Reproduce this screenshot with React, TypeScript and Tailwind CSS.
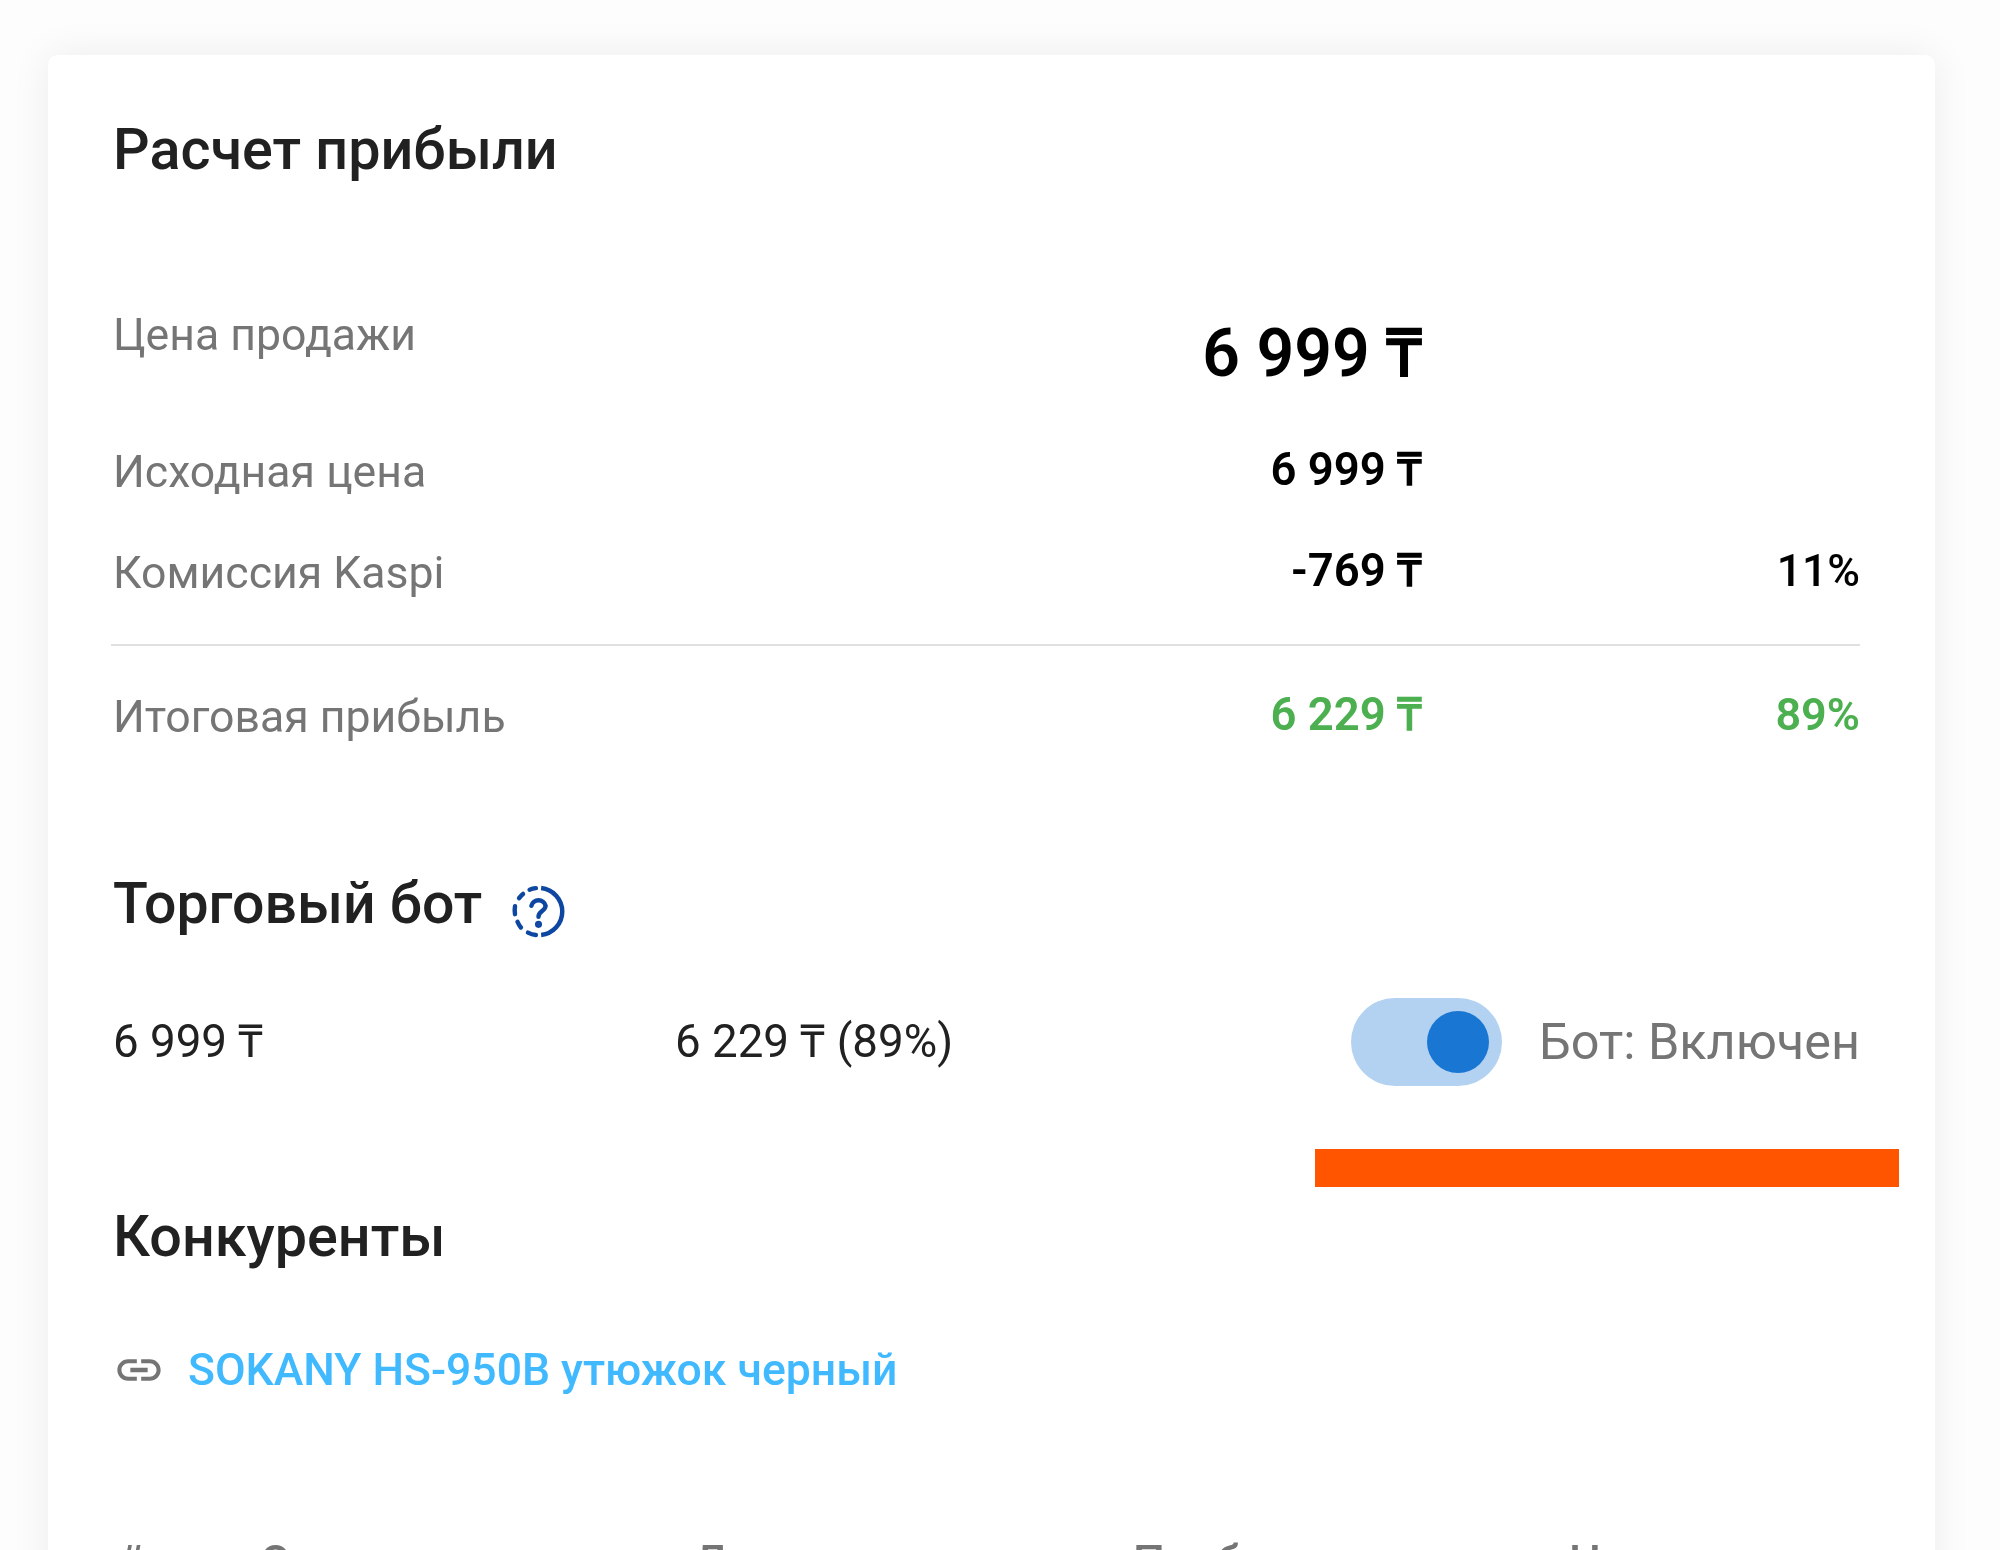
const FONT = 'font-["Roboto",sans-serif]'

const ROWS = [
  { label: 'Исходная цена', value: '6 999 ₸', pct: '' },
  { label: 'Комиссия Kaspi', value: '-769 ₸', pct: '11%' },
]

function HelpIcon() {
  return (
    <svg viewBox="0 0 24 24" className="mt-[14px] h-[63px] w-[63px]" fill="none" stroke="#0d47a1" strokeWidth="1.7">
      <path d="M13 3.05a9 9 0 0 1 0 17.9" />
      <path d="M8.6 3.7a9 9 0 0 1 2.4-.6" strokeLinecap="round" />
      <path d="M4.6 6.9a9 9 0 0 1 1.5-1.6" strokeLinecap="round" />
      <path d="M3.05 13a9 9 0 0 1 0-3" strokeLinecap="round" />
      <path d="M5.3 18.1a9 9 0 0 1-1.3-2.2" strokeLinecap="round" />
      <path d="M11 20.95a9 9 0 0 1-3-.9" strokeLinecap="round" />
      <path d="M9.3 9.8a2.8 2.8 0 0 1 5.4 0c0 2-2.7 2.1-2.7 4.2" strokeLinecap="round" />
      <circle cx="12" cy="16.9" r="0.5" fill="#0d47a1" />
    </svg>
  )
}

function LinkIcon() {
  return (
    <svg viewBox="0 0 24 24" className="h-[52px] w-[52px]" fill="#757575">
      <path d="M3.9 12c0-1.71 1.39-3.1 3.1-3.1h4V7H7c-2.76 0-5 2.24-5 5s2.24 5 5 5h4v-1.9H7c-1.71 0-3.1-1.39-3.1-3.1zM8 13h8v-2H8v2zm9-6h-4v1.9h4c1.71 0 3.1 1.39 3.1 3.1s-1.39 3.1-3.1 3.1h-4V17h4c2.76 0 5-2.24 5-5s-2.24-5-5-5z" />
    </svg>
  )
}

export default function App() {
  return (
    <div className={`h-[1550px] w-[2000px] overflow-hidden bg-[#fdfdfd] pl-[48px] pt-[55px] ${FONT}`}>
      <div className="h-[1600px] w-[1887px] rounded-[10px] bg-white pl-[65px] pr-[75px] pt-[54px] shadow-[0_0_40px_rgba(0,0,0,0.07)] blur-[0.7px]">
        {/* ── Расчет прибыли ─────────────────── */}
        <h2 className="flex h-[82px] items-center text-[57.5px] font-medium text-[#212121]">Расчет прибыли</h2>

        <div className="mt-[99px] grid h-[132px] grid-cols-[700px_609px_438px]">
          <span className="pt-[15px] text-[44.6px] leading-[60px] text-[#757575]">Цена продажи</span>
          <span className="pt-[34px] text-right text-[66px] leading-[60px] font-semibold text-black">6 999 ₸</span>
        </div>

        {ROWS.map(row => (
          <div key={row.label} className="grid h-[101px] grid-cols-[700px_609px_438px] items-center">
            <span className="text-[44.6px] text-[#757575]">{row.label}</span>
            <span className="-mt-[4px] text-right text-[45.5px] font-semibold text-black">{row.value}</span>
            <span className="-mt-[4px] text-right text-[44.5px] font-medium text-black">{row.pct}</span>
          </div>
        ))}

        <div className="-ml-[2px] mt-[20px] h-[2px] w-[1749px] bg-[#e0e0e0]" />

        <div className="grid h-[142px] grid-cols-[700px_609px_438px] items-center">
          <span className="text-[44.6px] text-[#757575]">Итоговая прибыль</span>
          <span className="-mt-[4px] text-right text-[45.5px] font-semibold text-[#4caf50]">6 229 ₸</span>
          <span className="-mt-[4px] text-right text-[45px] font-semibold text-[#4caf50]">89%</span>
        </div>

        {/* ── Торговый бот ───────────────────── */}
        <div className="mt-[75px] flex h-[82px] items-center gap-[25px]">
          <h2 className="text-[57.2px] font-medium text-[#212121]">Торговый бот</h2>
          <HelpIcon />
        </div>

        <div className="mt-[53px] flex h-[88px] items-center text-[45.7px] text-[#212121]">
          <span className="w-[562px]">6 999 ₸</span>
          <span>6 229 ₸ (89%)</span>
          <div className="ml-auto flex items-center gap-[37px]">
            <div className="relative h-[88px] w-[151px] rounded-full bg-[#b3d1f1]">
              <div className="absolute right-[13px] top-[13px] h-[62px] w-[62px] rounded-full bg-[#1976d2]" />
            </div>
            <span className="text-[50.4px] text-[#757575]">Бот: Включен</span>
          </div>
        </div>

        <div className="ml-[1202px] mt-[63px] h-[38px] w-[584px] bg-[#ff5500]" />

        {/* ── Конкуренты ─────────────────────── */}
        <h2 className="mt-[9px] flex h-[82px] items-center text-[57.5px] font-medium text-[#212121]">Конкуренты</h2>

        <div className="mt-[62px] flex h-[60px] items-center">
          <LinkIcon />
          <span className="ml-[23px] text-[44.5px] font-medium text-[#40b9ff]">SOKANY HS-950B утюжок черный</span>
        </div>

        <div className="mt-[132px] flex text-[45px] leading-[60px] font-medium text-[#757575]">
          <span className="w-[147px] pl-[4px]">#</span>
          <span className="w-[434px]">Описание</span>
          <span className="w-[439px]">Доставка</span>
          <span className="w-[436px]">Прибыль</span>
          <span>Наценка</span>
        </div>
      </div>
    </div>
  )
}
